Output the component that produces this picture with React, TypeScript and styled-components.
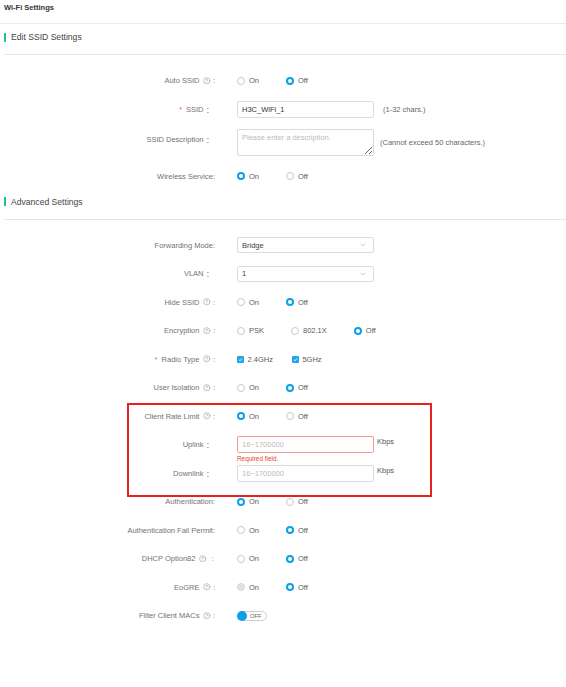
import React from "react";
import styled, { createGlobalStyle } from "styled-components";
import { ChevronDown, CircleHelp } from "lucide-react";

const GlobalStyle = createGlobalStyle`
  body {
    margin: 0;
    background: #fff;
    font-family: "Liberation Sans", "Noto Sans CJK SC", Arial, sans-serif;
  }
`;

const Page = styled.div`
  position: relative;
  width: 566px;
  min-height: 687px;
  color: #666;
  font-size: 7.5px;
`;

const TopBar = styled.div`
  height: 24px;
  box-sizing: border-box;
  padding: 3px 0 0 4px;
  border-bottom: 1px solid #ececec;
  font-weight: bold;
  color: #333;
  line-height: 10px;
`;

const SectionHeader = styled.div`
  display: flex;
  align-items: center;
  height: 31px;
  box-sizing: border-box;
  margin-left: 4px;
  padding-bottom: 4px;
  border-bottom: 1px solid #e6e6e6;
  font-size: 8.6px;
  color: #444;

  &::before {
    content: "";
    width: 2px;
    height: 9px;
    background: #1dbf9c;
    margin-right: 5px;
  }
`;

const Form = styled.div`
  display: grid;
  grid-template-columns: 215px 1fr;
  column-gap: 22px;
  row-gap: 11.5px;
  padding: 17px 0 4px;
`;

const Label = styled.div<{ $top?: number }>`
  display: flex;
  justify-content: flex-end;
  align-items: center;
  height: 17px;
  padding-top: ${(p) => p.$top ?? 0}px;
  white-space: nowrap;
  color: #737373;
`;

const Colon = styled.span<{ $wide?: boolean }>`
  margin-left: ${(p) => (p.$wide ? 2.5 : 0)}px;
  margin-right: ${(p) => (p.$wide ? 1.5 : 0)}px;
`;

const Required = styled.span`
  color: #f05050;
  margin-right: 4px;
  font-size: 7px;
`;

const Help = styled(CircleHelp)`
  margin: 0 2px 0 4px;
  color: #8a8a8a;
  flex: none;
`;

const Field = styled.div`
  position: relative;
  display: flex;
  align-items: center;
  min-height: 17px;
`;

const Option = styled.label<{ $gap?: number }>`
  display: inline-flex;
  align-items: center;
  margin-right: ${(p) => p.$gap ?? 27}px;
  color: #5a5a5a;
  white-space: nowrap;
`;

const Radio = styled.span<{ $checked?: boolean; $disabled?: boolean }>`
  width: 8px;
  height: 8px;
  box-sizing: border-box;
  border-radius: 50%;
  margin-right: 4px;
  background: ${(p) => (p.$disabled ? "#e2e2e2" : "#fff")};
  border: ${(p) =>
    p.$checked ? "2.5px solid #0aa1e8" : p.$disabled ? "1px solid #d8d8d8" : "1px solid #c8c8c8"};
`;

const Check = styled.span`
  display: inline-flex;
  align-items: center;
  justify-content: center;
  width: 7px;
  height: 7px;
  border-radius: 1px;
  background: #1ea7ea;
  margin-right: 3.5px;
`;

const TextInput = styled.input<{ $error?: boolean }>`
  width: 137px;
  height: 17px;
  box-sizing: border-box;
  padding: 0 4px;
  border: 1px solid ${(p) => (p.$error ? "#f29a9a" : "#dcdcdc")};
  border-radius: 2px;
  font: inherit;
  font-size: 7.5px;
  color: #333;
  outline: none;

  &::placeholder {
    color: #bbb;
  }
`;

const TextArea = styled.textarea`
  width: 137px;
  height: 27px;
  box-sizing: border-box;
  padding: 3px 4px;
  border: 1px solid #dcdcdc;
  border-radius: 2px;
  font: inherit;
  font-size: 7.5px;
  color: #333;
  outline: none;
  resize: both;

  &::placeholder {
    color: #bbb;
  }
`;

const Select = styled.div`
  display: flex;
  align-items: center;
  justify-content: space-between;
  width: 137px;
  height: 16px;
  box-sizing: border-box;
  padding: 0 6px 0 4px;
  border: 1px solid #dcdcdc;
  border-radius: 2px;
  color: #444;
`;

const Hint = styled.span<{ $gap?: number }>`
  margin-left: ${(p) => p.$gap ?? 8}px;
  color: #666;
  white-space: nowrap;
`;

const Unit = styled.span`
  align-self: flex-start;
  margin-left: 3px;
  line-height: 12px;
  color: #555;
`;

const ErrorTip = styled.div`
  position: absolute;
  left: 0;
  top: 18px;
  font-size: 6.4px;
  line-height: 9px;
  color: #e8452f;
`;

const Toggle = styled.span`
  display: inline-flex;
  align-items: center;
  width: 30px;
  height: 10px;
  box-sizing: border-box;
  border: 1px solid #cfcfcf;
  border-radius: 6px;
`;

const Knob = styled.span`
  width: 10px;
  height: 10px;
  margin-left: -1px;
  border-radius: 50%;
  background: #0aa1e8;
`;

const ToggleText = styled.span`
  margin-left: 3px;
  font-size: 5.8px;
  color: #666;
`;

const Annotation = styled.div`
  position: absolute;
  left: 127px;
  top: 403px;
  width: 305px;
  height: 94px;
  box-sizing: border-box;
  border: 2px solid #e8211c;
  pointer-events: none;
`;

type LabelProps = { text: string; help?: boolean; req?: boolean; colon?: string; top?: number };

const RowLabel = ({ text, help, req, colon = ":", top }: LabelProps) => (
  <Label $top={top}>
    {req && <Required>*</Required>}
    <span>{text}</span>
    {help && <Help size={7.5} strokeWidth={1.6} />}
    <Colon $wide={colon === "：" || colon === " :"}>{colon.trim()}</Colon>
  </Label>
);

const OnOff = ({ on, disabled }: { on: boolean; disabled?: boolean }) => (
  <Field>
    <Option>
      <Radio $checked={on} $disabled={disabled} />
      On
    </Option>
    <Option>
      <Radio $checked={!on} />
      Off
    </Option>
  </Field>
);

const Tick = () => (
  <svg width="5" height="5" viewBox="0 0 10 10">
    <path d="M2 5.5 L4.2 7.6 L8 2.8" fill="none" stroke="#fff" strokeWidth="1.6" />
  </svg>
);

export default function App() {
  return (
    <Page>
      <GlobalStyle />
      <TopBar>Wi-Fi Settings</TopBar>

      <SectionHeader>Edit SSID Settings</SectionHeader>
      <Form>
        <RowLabel text="Auto SSID" help />
        <OnOff on={false} />

        <RowLabel text="SSID" req colon="：" />
        <Field>
          <TextInput defaultValue="H3C_WiFi_1" />
          <Hint $gap={9}>(1-32 chars.)</Hint>
        </Field>

        <RowLabel text="SSID Description" colon="：" top={2} />
        <Field>
          <TextArea placeholder="Please enter a description." />
          <Hint $gap={6}>(Cannot exceed 50 characters.)</Hint>
        </Field>

        <RowLabel text="Wireless Service" />
        <OnOff on />
      </Form>

      <SectionHeader>Advanced Settings</SectionHeader>
      <Form>
        <RowLabel text="Forwarding Mode" />
        <Field>
          <Select>
            Bridge
            <ChevronDown size={8} color="#999" strokeWidth={1.5} />
          </Select>
        </Field>

        <RowLabel text="VLAN" colon="：" />
        <Field>
          <Select>
            1
            <ChevronDown size={8} color="#999" strokeWidth={1.5} />
          </Select>
        </Field>

        <RowLabel text="Hide SSID" help />
        <OnOff on={false} />

        <RowLabel text="Encryption" help />
        <Field>
          <Option>
            <Radio />
            PSK
          </Option>
          <Option>
            <Radio />
            802.1X
          </Option>
          <Option>
            <Radio $checked />
            Off
          </Option>
        </Field>

        <RowLabel text="Radio Type" help req />
        <Field>
          <Option $gap={19}>
            <Check>
              <Tick />
            </Check>
            2.4GHz
          </Option>
          <Option>
            <Check>
              <Tick />
            </Check>
            5GHz
          </Option>
        </Field>

        <RowLabel text="User Isolation" help />
        <OnOff on={false} />

        <RowLabel text="Client Rate Limit" help />
        <OnOff on />

        <RowLabel text="Uplink" colon="：" />
        <Field>
          <TextInput $error placeholder="16~1700000" />
          <Unit>Kbps</Unit>
          <ErrorTip>Required field.</ErrorTip>
        </Field>

        <RowLabel text="Downlink" colon="：" />
        <Field>
          <TextInput placeholder="16~1700000" />
          <Unit>Kbps</Unit>
        </Field>

        <RowLabel text="Authentication" />
        <OnOff on />

        <RowLabel text="Authentication Fail Permit" />
        <OnOff on={false} />

        <RowLabel text="DHCP Option82" help colon=" :" />
        <OnOff on={false} />

        <RowLabel text="EoGRE" help />
        <OnOff on={false} disabled />

        <RowLabel text="Filter Client MACs" help />
        <Field>
          <Toggle>
            <Knob />
            <ToggleText>OFF</ToggleText>
          </Toggle>
        </Field>
      </Form>

      <Annotation />
    </Page>
  );
}
